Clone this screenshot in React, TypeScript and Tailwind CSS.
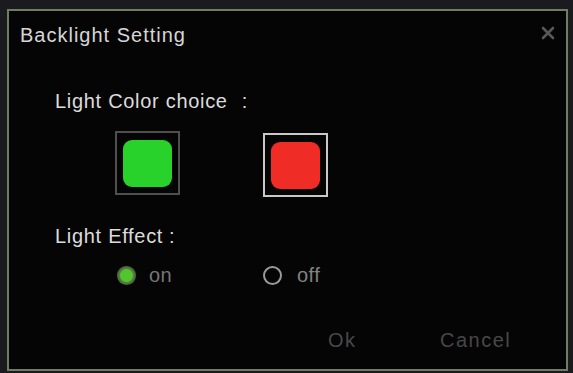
import React from "react";

function CloseIcon() {
  return (
    <svg width="16" height="16" viewBox="0 0 16 16" className="absolute right-[10px] top-[14px]">
      <path d="M3 3 L13 13 M13 3 L3 13" stroke="#585858" strokeWidth="2.6" strokeLinecap="round" />
    </svg>
  );
}

interface SwatchProps {
  color: string;
  frame: string;
  className?: string;
}

function Swatch({ color, frame, className = "" }: SwatchProps) {
  return (
    <div className={`w-[65px] h-[64px] border-2 flex items-center justify-center ${frame} ${className}`}>
      <div className={`w-[49px] h-[47px] rounded-[9px] ${color}`} />
    </div>
  );
}

export default function App() {
  return (
    <div
      className="w-[573px] h-[373px] overflow-hidden bg-[#1b1a1e] pt-[9px] pl-[7px]"
      style={{ fontFamily: '"Liberation Sans", Arial, sans-serif' }}>
      <div className="relative w-[561px] h-[362px] border-2 border-[#6f7e63] bg-[#050505] text-[20px] leading-[24px]">
        <CloseIcon />

        {/* Title */}
        <div className="pt-[12px] pl-[11px] text-[#d6d6d6] tracking-[1px]">
          Backlight Setting
        </div>

        <div className="pl-[46px]">
          {/* Light color */}
          <div className="mt-[42px] text-[#dcdcdc] tracking-[0.7px]">
            Light Color choice<span className="ml-[14px]">:</span>
          </div>

          <div className="mt-[18px] pl-[60px] flex items-start">
            <Swatch color="bg-[#29d22b]" frame="border-[#4f4f4f]" />
            <Swatch
              color="bg-[#ef2c25]"
              frame="border-[#c9c9c9]"
              className="ml-[83px] mt-[2px]"
            />
          </div>

          {/* Light effect */}
          <div className="mt-[27px] text-[#dcdcdc] tracking-[0.7px]">
            Light Effect<span className="ml-[6px]">:</span>
          </div>

          <div className="mt-[15px] pl-[62px] flex items-center h-[24px]">
            <div className="w-[146px] flex items-center">
              <div className="w-[19px] h-[19px] rounded-full bg-[#4f5a46] flex items-center justify-center">
                <div className="w-[13px] h-[13px] rounded-full bg-[#52c42e] shadow-[0_0_4px_#5fd03a]" />
              </div>
              <span className="ml-[13px] text-[#767676] tracking-[0.5px]">on</span>
            </div>
            <div className="flex items-center">
              <div className="w-[19px] h-[19px] rounded-full border-2 border-[#9a9a9a]" />
              <span className="ml-[15px] text-[#828282] tracking-[0.5px]">off</span>
            </div>
          </div>
        </div>

        {/* Buttons */}
        <div className="mt-[41px] pl-[319px] flex items-center text-[#484848] tracking-[1.5px]">
          <span className="w-[112px]">Ok</span>
          <span>Cancel</span>
        </div>
      </div>
    </div>
  );
}
